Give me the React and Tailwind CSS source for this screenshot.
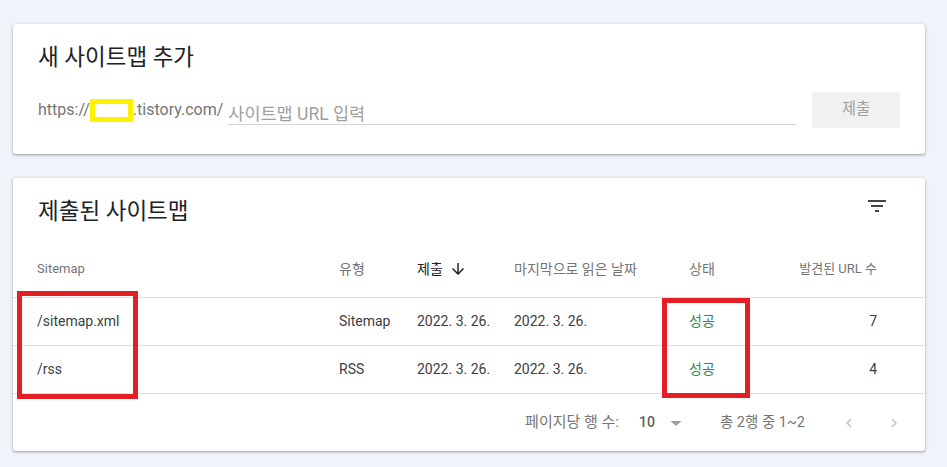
import React from 'react';

const FilterIcon = () => (
  <svg width="24" height="24" viewBox="0 0 24 24" fill="#444746">
    <path d="M10 18h4v-2h-4v2zM3 6v2h18V6H3zm3 7h12v-2H6v2z" />
  </svg>
);

const ArrowDown = () => (
  <svg width="18" height="18" viewBox="0 0 24 24" fill="#202124">
    <path d="M20 12l-1.41-1.41L13 16.17V4h-2v12.17l-5.58-5.59L4 12l8 8 8-8z" />
  </svg>
);

const DropDown = () => (
  <svg width="24" height="24" viewBox="0 0 24 24" fill="#9e9e9e">
    <path d="M6.5 10l5.5 5 5.5-5z" />
  </svg>
);

const ChevronLeft = () => (
  <svg width="18" height="18" viewBox="0 0 24 24" fill="#c4c4c4">
    <path d="M15.41 7.41L14 6l-6 6 6 6 1.41-1.41L10.83 12z" />
  </svg>
);

const ChevronRight = () => (
  <svg width="18" height="18" viewBox="0 0 24 24" fill="#c4c4c4">
    <path d="M10 6L8.59 7.41 13.17 12l-4.58 4.59L10 18l6-6z" />
  </svg>
);

const sitemaps = [
  { path: '/sitemap.xml', type: 'Sitemap', submitted: '2022. 3. 26.', lastRead: '2022. 3. 26.', status: '성공', urls: 7 },
  { path: '/rss', type: 'RSS', submitted: '2022. 3. 26.', lastRead: '2022. 3. 26.', status: '성공', urls: 4 },
];

const cols = 'grid grid-cols-[302px_78px_97px_175px_1fr] items-center pl-6 pr-12';

export default function App() {
  return (
    <div className="min-h-[467px] bg-[#f0f4fa] pl-[13px] pr-[22px] pt-6 pb-4 font-['Roboto','Noto_Sans_CJK_KR',sans-serif]">
      {/* Add sitemap */}
      <div className="rounded-[3px] bg-white px-[25px] pt-[19px] pb-[26px] shadow-[0_1px_2px_0_rgba(60,64,67,0.3),0_1px_3px_1px_rgba(60,64,67,0.15)]">
        <h2 className="h-7 text-[22.5px] leading-7 text-[#202124]">새 사이트맵 추가</h2>
        <div className="mt-[21px] flex h-9 items-center">
          <span className="flex items-center text-[16px] text-[#757575]">
            https://
            <span className="inline-block h-[23px] w-[43px] border-[5px] border-[#fff200] bg-white" />
            .tistory.com/
          </span>
          <div className="ml-[5px] flex h-full flex-1 items-end pb-[3px]">
            <input
              type="text"
              placeholder="사이트맵 URL 입력"
              className="h-[24px] w-full border-b border-[#d6d6d6] pt-[2px] text-[17.5px] leading-[22px] text-[#202124] outline-none placeholder:text-[#a0a0a0]"
            />
          </div>
          <button className="ml-4 h-9 w-[88px] rounded-[3px] bg-[#f1f1f1] text-[15.5px] text-[#9e9e9e]">제출</button>
        </div>
      </div>

      {/* Submitted sitemaps */}
      <div className="relative mt-6 rounded-[3px] bg-white shadow-[0_1px_2px_0_rgba(60,64,67,0.3),0_1px_3px_1px_rgba(60,64,67,0.15)]">
        <div className="flex items-start justify-between px-[25px] pt-[19px]">
          <h2 className="h-7 text-[22.5px] leading-7 text-[#202124]">제출된 사이트맵</h2>
          <div className="-mt-[3px] mr-[11px]">
            <FilterIcon />
          </div>
        </div>

        <div className={`${cols} mt-4 h-[57px] border-b border-[#e0e0e0] text-[13px] text-[#757575]`}>
          <span>Sitemap</span>
          <span className="text-[14px]">유형</span>
          <span className="flex items-center text-[14px] text-[#202124]">
            제출
            <span className="ml-[6px]">
              <ArrowDown />
            </span>
          </span>
          <span className="text-[14px]">마지막으로 읽은 날짜</span>
          <span className="flex justify-between">
            <span className="text-[14px]">상태</span>
            <span>발견된 URL 수</span>
          </span>
        </div>

        {sitemaps.map((s) => (
          <div key={s.path} className={`${cols} h-12 border-b border-[#e0e0e0] text-[14px] text-[#3c4043]`}>
            <span>{s.path}</span>
            <span>{s.type}</span>
            <span>{s.submitted}</span>
            <span>{s.lastRead}</span>
            <span className="flex justify-between">
              <span className="text-[#2e8b57]">{s.status}</span>
              <span>{s.urls}</span>
            </span>
          </div>
        ))}

        <div className="flex h-[57px] items-center justify-end pr-[19px] text-[14px] text-[#757575]">
          <span className="text-[15px]">페이지당 행 수:</span>
          <span className="ml-5 font-medium text-[#616161]">10</span>
          <span className="ml-[9px]">
            <DropDown />
          </span>
          <span className="ml-[32px] text-[14.5px]">총 2행 중 1~2</span>
          <span className="ml-[32px] flex h-6 w-6 items-center justify-center">
            <ChevronLeft />
          </span>
          <span className="ml-[21px] flex h-6 w-6 items-center justify-center">
            <ChevronRight />
          </span>
        </div>

        {/* annotation boxes */}
        <div className="absolute left-[4px] top-[113px] h-[108px] w-[121px] border-[5px] border-[#e31e24]" />
        <div className="absolute left-[649px] top-[120px] h-[100px] w-[88px] border-[5px] border-[#e31e24]" />
      </div>
    </div>
  );
}
